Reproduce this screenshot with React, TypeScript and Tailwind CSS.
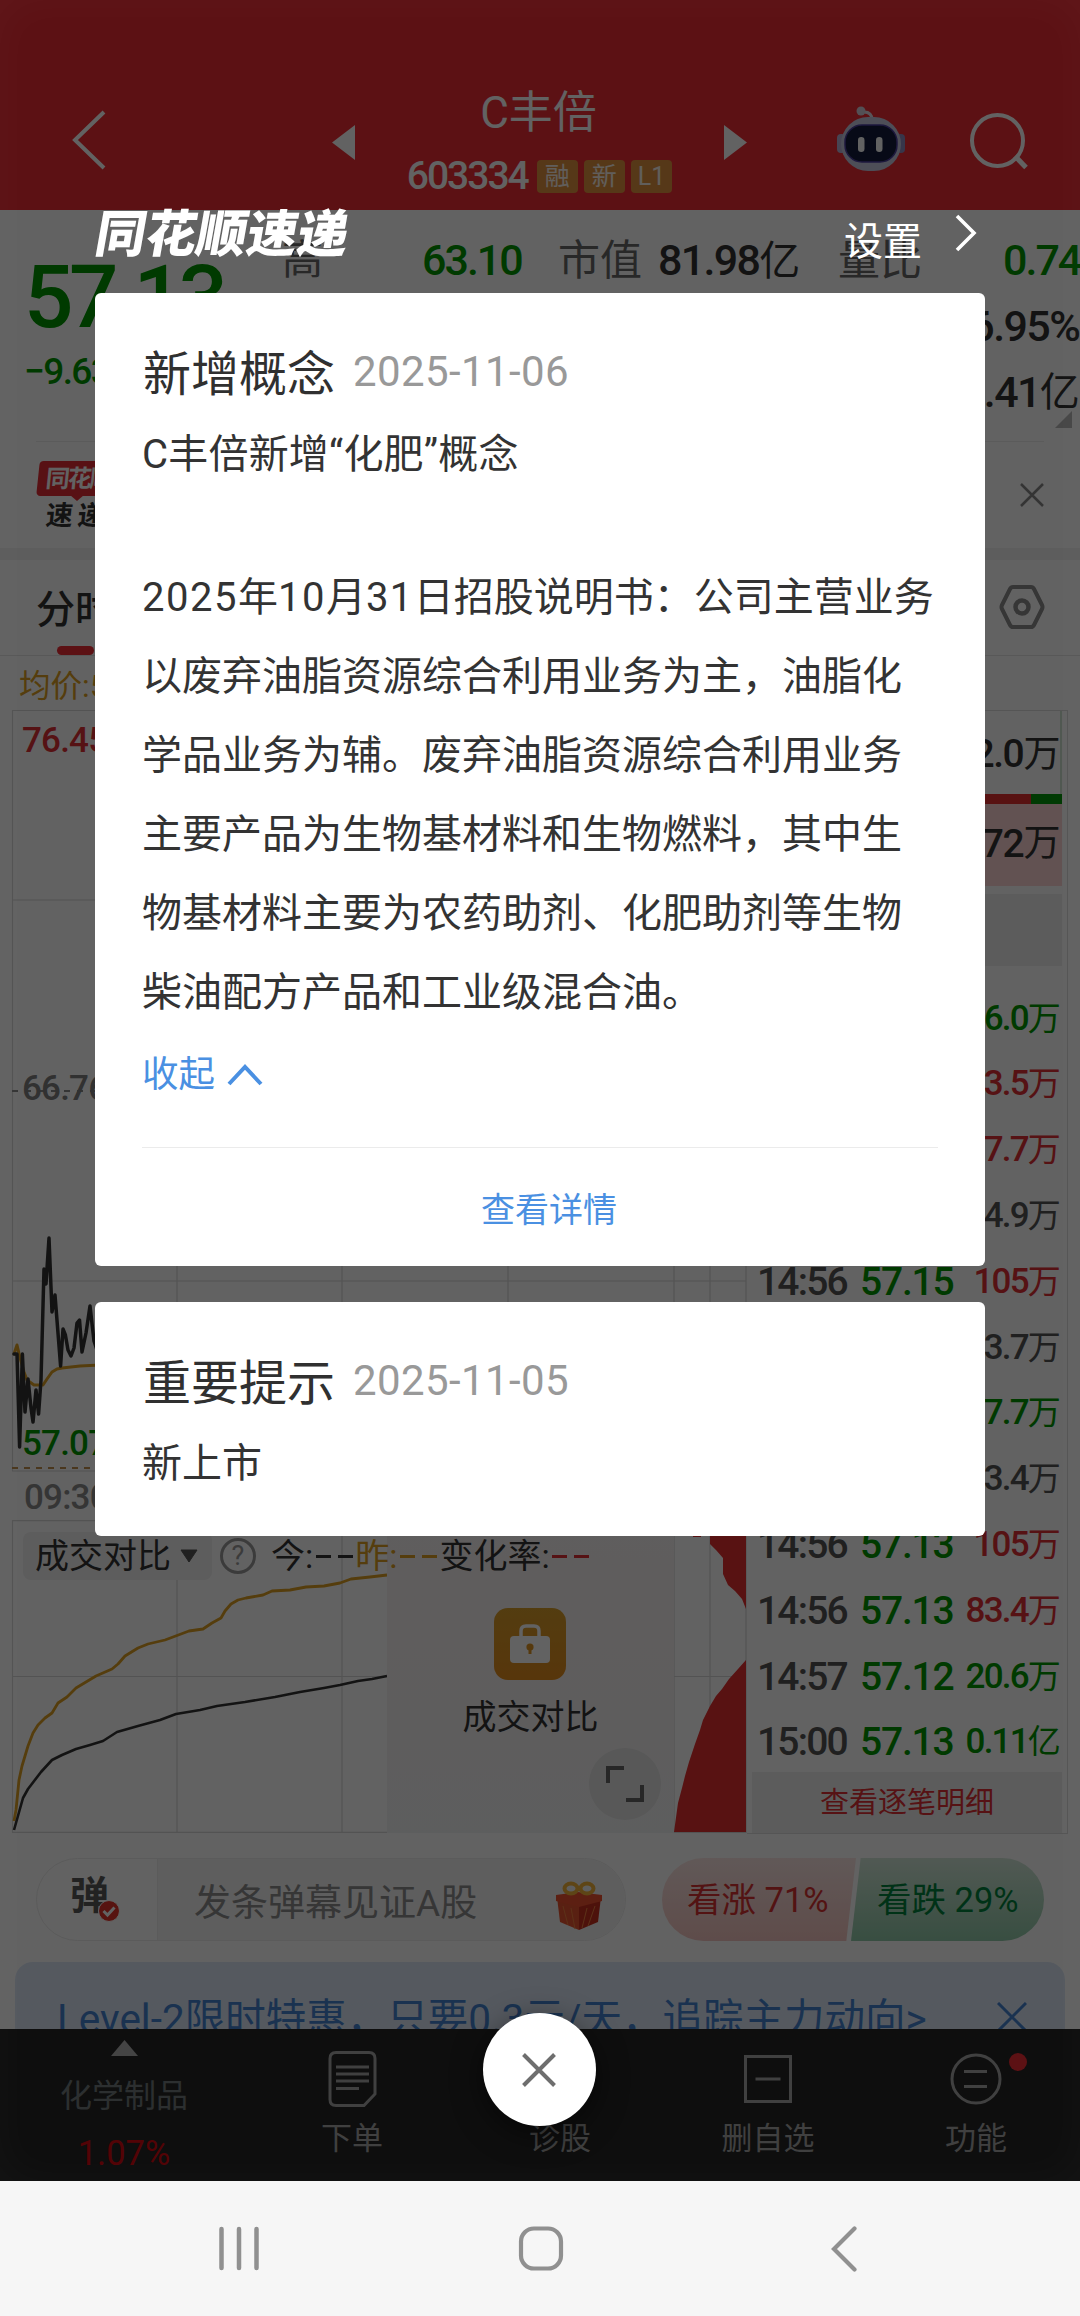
import React from 'react';

interface Tick {
  time: string;
  price: string;
  volume: string;
  tone: 'up' | 'down' | 'flat';
}

const ticks: Tick[] = [
  { time: '14:56', price: '57.13', volume: '36.0万', tone: 'down' },
  { time: '14:56', price: '57.15', volume: '83.5万', tone: 'up' },
  { time: '14:56', price: '57.15', volume: '67.7万', tone: 'up' },
  { time: '14:56', price: '57.14', volume: '54.9万', tone: 'flat' },
  { time: '14:56', price: '57.15', volume: '105万', tone: 'up' },
  { time: '14:56', price: '57.14', volume: '43.7万', tone: 'flat' },
  { time: '14:56', price: '57.13', volume: '77.7万', tone: 'down' },
  { time: '14:56', price: '57.13', volume: '63.4万', tone: 'flat' },
  { time: '14:56', price: '57.13', volume: '105万', tone: 'up' },
  { time: '14:56', price: '57.13', volume: '83.4万', tone: 'up' },
  { time: '14:57', price: '57.12', volume: '20.6万', tone: 'down' },
  { time: '15:00', price: '57.13', volume: '0.11亿', tone: 'down' },
];

const toneClass = {
  up: 'text-[#e03035]',
  down: 'text-[#009600]',
  flat: 'text-[#555]',
};

const RobotIcon: React.FC = () => (
  <svg width="70" height="68" viewBox="0 0 70 68" fill="none">
    <path d="M36 15c0-5-2-8-8-8" stroke="#e4dce8" strokeWidth="3" />
    <circle cx="25" cy="6" r="4.5" fill="#d8d0dc" />
    <rect x="1" y="29" width="9" height="19" rx="4" fill="#b9b4d8" />
    <rect x="60" y="29" width="9" height="19" rx="4" fill="#8f8cc0" />
    <rect x="5" y="12" width="60" height="54" rx="27" fill="#c9cbe2" />
    <rect x="9" y="20" width="52" height="37" rx="17" fill="#141c3c" stroke="#4c3fa0" strokeWidth="1.5" />
    <rect x="22" y="32" width="6.5" height="15" rx="3.2" fill="#fff" />
    <rect x="40" y="32" width="6.5" height="15" rx="3.2" fill="#fff" />
  </svg>
);

const Badge: React.FC<{ children: React.ReactNode }> = ({ children }) => (
  <span className="flex h-[33px] min-w-[41px] items-center justify-center rounded-[4px] bg-[#e0913f] px-[7px] text-[25px] leading-none text-white/90">
    {children}
  </span>
);

const Header: React.FC = () => (
  <header className="flex h-[210px] shrink-0 items-end bg-[#f02c34] pl-[72px] text-white">
    <div className="mb-[40px] w-[260px] shrink-0">
      <svg width="34" height="60" viewBox="0 0 34 60" fill="none" stroke="currentColor" strokeWidth="4">
        <path d="M32 2L3 30l29 28" />
      </svg>
    </div>
    <div className="mb-[50px] w-[23px] shrink-0">
      <svg width="23" height="35" viewBox="0 0 23 35" fill="currentColor">
        <path d="M23 0v35L0 17.5z" />
      </svg>
    </div>
    <div className="mb-[16px] flex w-[369px] shrink-0 flex-col items-center">
      <div className="-ml-[2px] text-[44px] leading-[60px]">C丰倍</div>
      <div className="mt-[15px] flex items-center gap-[6px]">
        <span className="mr-[3px] text-[39px] font-medium leading-[36px] tracking-[-2px]">603334</span>
        <Badge>融</Badge>
        <Badge>新</Badge>
        <Badge>L1</Badge>
      </div>
    </div>
    <div className="mb-[50px] w-[112px] shrink-0">
      <svg width="23" height="35" viewBox="0 0 23 35" fill="currentColor">
        <path d="M0 0v35l23-17.5z" />
      </svg>
    </div>
    <div className="mb-[37px] w-[134px] shrink-0">
      <RobotIcon />
    </div>
    <div className="mb-[40px] shrink-0">
      <svg width="58" height="58" viewBox="0 0 58 58" fill="none" stroke="currentColor" strokeWidth="4">
        <circle cx="27.5" cy="28.5" r="25.5" />
        <path d="M45 44l11 11.5" strokeWidth="5" />
      </svg>
    </div>
  </header>
);

const Quote: React.FC = () => (
  <section className="flex h-[231px] shrink-0 overflow-hidden text-[#333]">
    <div className="w-[282px] shrink-0 pl-[24px] font-medium text-[#009600]">
      <div className="mt-[45px] text-[87px] leading-[84px] tracking-[-4.5px]">57.13</div>
      <div className="mt-[12px] text-[37px] leading-[42px] tracking-[-1.6px]">−9.63%</div>
    </div>
    <div className="flex-1 pt-[18px]">
      <div className="flex h-[65px] items-center whitespace-nowrap text-[43px]">
        <span className="w-[140px] text-[41px] text-[#686868]">高</span>
        <span className="w-[136px] font-medium tracking-[-2px] text-[#009600]">63.10</span>
        <span className="w-[100px] text-[42px] text-[#686868]">市值</span>
        <span className="w-[180px] font-medium tracking-[-1.7px]">
          81.98<span className="text-[41px] font-normal">亿</span>
        </span>
        <span className="w-[165px] text-[42px] text-[#686868]">量比</span>
        <span className="font-medium tracking-[-2px] text-[#009600]">0.74</span>
      </div>
      <div className="flex h-[67px] items-center justify-end pr-px text-[43px] font-medium tracking-[-1.6px]">
        16.95%
      </div>
      <div className="flex h-[65px] items-center justify-end pr-[2px] text-[43px] font-medium tracking-[-1.6px]">
        14.41<span className="text-[40px] font-normal">亿</span>
      </div>
      <div className="-mt-[14px] flex justify-end pr-[8px]">
        <svg width="17" height="17" viewBox="0 0 17 17">
          <path d="M17 0v17H0z" fill="#b8b8b8" />
        </svg>
      </div>
    </div>
  </section>
);

const NewsStrip: React.FC = () => (
  <section className="flex h-[107px] shrink-0 items-start justify-between px-[36px]">
    <div className="flex w-[120px] flex-col border-t border-[#ececec] pt-[19px]">
      <div className="ml-[2px] flex h-[35px] w-[120px] -skew-x-6 items-center rounded-[4px] bg-[#e62e34] pl-[8px] text-[24px] font-bold leading-none tracking-[-2px] text-white">
        同花顺
      </div>
      <div className="-mt-px ml-[34px] h-0 w-0 border-x-[7px] border-t-[6px] border-x-transparent border-t-[#e62e34]"></div>
      <div className="-skew-x-6 pl-[10px] text-[27px] font-bold leading-[30px] tracking-[-1px] text-[#333]">速 递</div>
    </div>
    <div className="flex h-[106px] flex-1 items-center justify-end border-t border-[#ececec]">
      <svg width="24" height="24" viewBox="0 0 24 24" fill="none" stroke="#888" strokeWidth="2.5">
        <path d="M1 1l22 22M23 1L1 23" />
      </svg>
    </div>
  </section>
);

const Tabs: React.FC = () => (
  <nav className="flex h-[96px] shrink-0 items-start justify-between border-b border-[#e6e6e6] pl-[36px] pr-[35px]">
    <div className="flex flex-col items-center pt-[21px]">
      <span className="text-[39px] font-medium leading-[58px] text-[#333]">分时</span>
      <span className="mt-[7px] h-[9px] w-[37px] rounded-full bg-[#f02c34]"></span>
    </div>
    <svg className="mt-[25px]" width="46" height="44" viewBox="0 0 46 44" fill="none" stroke="#8c8c8c" strokeWidth="4">
      <path d="M14 2h18q2 0 3 2l8 16q1 2 0 4l-8 16q-1 2-3 2H14q-2 0-3-2L3 24q-1-2 0-4L11 4q1-2 3-2z" />
      <circle cx="23" cy="22" r="6.5" strokeWidth="4.5" />
    </svg>
  </nav>
);

const PRICE_LINE =
  '14,354 17,354 19.6,447 22.4,354 25,412 28,379 31,408 33,422 36,390 38.6,414 41,380 44,269 46,284 49,238 52,312 55,295 60.6,366 63,329 65.4,335 68,350 71,356 74,348 77,323 79.5,320 82,352 86,333 90,306 94,341 97,350';
const AVG_LINE = '14,354 17,345 19.6,356 24,372 27,380 34,385 43,385 47,379 52,372 57,369 62,368 80,366 100,365';
const YESTERDAY_LINE =
  '14,301 16,290 19,260 22,246 28,226 33,213 38,205 45,198 52,193 58,183 67,177 76,168 96,156 112,149 118,144 125,136 138,128 148,124 165,120 189,111 203,109 212,103 221,98 225,91 231,84 238,80 246,78 263,75 272,71 290,70 306,67 324,66 340,63 351,59 370,57 387,55';
const TODAY_LINE =
  '14,310 23,278 28,269 41,252 52,240 62,235 76,229 90,225 103,221 117,212 138,206 160,200 176,194 200,190 217,186 245,182 275,177 300,172 324,168 340,165 358,161 372,159 387,156';

const Charts: React.FC = () => (
  <div className="w-[747px] shrink-0">
    <svg width="747" height="765" viewBox="0 710 747 765" fill="none" className="block">
      <g stroke="#d8d8d8" strokeWidth="1.2">
        <path d="M12 710.5H746M12 900H746M12 1281H746M12 1471H746" />
        <path d="M12.5 710v761M177 710v761M342 710v761M508 710v761M674 710v761M710 710v761M746 710v761" />
      </g>
      <path d="M12 1091H746" stroke="#8a8a8a" strokeWidth="2" strokeDasharray="6 7" />
      <path d="M12 1468H746" stroke="#c08f50" strokeWidth="1.8" strokeDasharray="6 6" />
      <g transform="translate(0 1000)" strokeWidth="3.5" strokeLinejoin="round" strokeLinecap="round">
        <polyline points={AVG_LINE} stroke="#dd9f22" strokeWidth="3" />
        <polyline points={PRICE_LINE} stroke="#333" />
      </g>
      <g fontSize="35" fontWeight="500" letterSpacing="-0.8">
        <text x="22" y="752" fill="#e03035">76.45</text>
        <text x="22" y="1100" fill="#808080">66.76</text>
        <text x="22" y="1455" fill="#009600">57.07</text>
      </g>
    </svg>
    <div className="h-[45px] pl-[24px] text-[35px] font-medium leading-[45px] tracking-[-0.8px] text-[#8a8a8a]">09:30</div>
    <div className="relative h-[313px]">
      <svg width="747" height="313" viewBox="0 0 747 313" fill="none" className="block">
        <g stroke="#d8d8d8" strokeWidth="1.2">
          <path d="M12 .6H746M12 156.5H746M12 312.4H746" />
          <path d="M12.5 0v313M177 0v313M342 0v313M674 0v313M710 0v313M746 0v313" />
        </g>
        <polyline points={YESTERDAY_LINE} stroke="#dd9f22" strokeWidth="2.8" strokeLinejoin="round" />
        <polyline points={TODAY_LINE} stroke="#333" strokeWidth="2.6" strokeLinejoin="round" />
        <path
          d="M674 312l4-29 4-15 3-12 4-14 6-18 5-14 3-10 7-14 6-10 6-7 7-10 9-10 8-9v172z"
          fill="#e4302f"
        />
        <path d="M693 0v17h8v-2h9v9l6 6 7 8v16l5 11 7 6 7 8 4 10V0z" fill="#e4302f" />
      </svg>

      {/* locked part of the comparison chart */}
      <div className="absolute left-[387px] top-0 flex h-[313px] w-[287px] flex-col items-center bg-linear-to-b from-[#f6f4f4] via-[#f6f1f1] via-40% to-[#f3f4f5] pt-[88px]">
        <div className="-ml-px flex h-[72px] w-[72px] items-center justify-center rounded-[14px] bg-linear-to-b from-[#d99e2a] to-[#e28c1e]">
          <svg width="42" height="42" viewBox="0 0 42 42" fill="none">
            <path d="M12 14V8q0-5 5-5h8q5 0 5 5v6" stroke="#fff" strokeWidth="3.5" />
            <rect x="1" y="13" width="40" height="27" rx="4" fill="#fff" />
            <circle cx="21" cy="24" r="3.6" fill="#df9524" />
            <path d="M21 25v6" stroke="#df9524" strokeWidth="3" />
          </svg>
        </div>
        <div className="mt-[13px] text-[34px] leading-[48px] text-[#333]">成交对比</div>
      </div>
      <div className="absolute left-[589px] top-[228px] flex h-[72px] w-[72px] items-center justify-center rounded-full bg-[#e4e4e4]">
        <svg width="40" height="38" viewBox="0 0 40 38" fill="none" stroke="#666" strokeWidth="4">
          <path d="M3 18V3h16M37 20v15H21" />
        </svg>
      </div>

      <div className="absolute left-[23px] top-[12px] flex h-[48px] items-center whitespace-nowrap text-[34px] text-[#333]">
        <div className="flex h-[48px] w-[189px] items-center gap-[9px] rounded-[8px] bg-[#f2f2f2] pl-[12px]">
          成交对比
          <svg width="18" height="14" viewBox="0 0 18 14">
            <path d="M1 1h16L9 13z" fill="#555" stroke="#555" strokeLinejoin="round" />
          </svg>
        </div>
        <div className="ml-[8px] flex h-[36px] w-[36px] items-center justify-center rounded-full border-[3px] border-[#9a9a9a] text-[27px] leading-none text-[#9a9a9a]">
          ?
        </div>
        <span className="ml-[15px]">今:</span>
        <Dashes className="bg-[#333]" />
        <span className="text-[#dd9f22]">昨:</span>
        <Dashes className="bg-[#dd9f22]" />
        <span>变化率:</span>
        <Dashes className="bg-[#e03035]" />
      </div>
    </div>
  </div>
);

const Dashes: React.FC<{ className: string }> = ({ className }) => (
  <span className="flex gap-[7px] px-[2.5px]">
    <i className={`h-[3px] w-[15px] ${className}`}></i>
    <i className={`h-[3px] w-[15px] ${className}`}></i>
  </span>
);

const OrderPanel: React.FC = () => (
  <div className="flex h-[1124px] w-[321px] flex-col border-b border-r border-t border-[#dcdcdc] pl-[5px] pr-[5px] text-[#333]">
    <div className="flex h-[83px] shrink-0 items-center justify-end border-r-2 border-[#cfe6d4] pr-px pt-[4px] text-[39px] font-medium tracking-[-1.4px]">
      12.0<span className="text-[37px] font-normal">万</span>
    </div>
    <div className="flex h-[10px] shrink-0">
      <div className="flex-1 bg-[#e4302f]"></div>
      <div className="w-[31px] bg-[#00960a]"></div>
    </div>
    <div className="flex h-[82px] shrink-0 items-start justify-end bg-[#ffd6d6] pr-[3px] pt-[9px] text-[39px] font-medium leading-[62px] tracking-[-1.4px]">
      172<span className="text-[37px] font-normal">万</span>
    </div>
    <div className="mt-[8px] h-[72px] shrink-0 bg-[#f0f0f0]"></div>
    <div className="mt-[20px] shrink-0">
      {ticks.map((tick, index) => (
        <div key={index} className="flex h-[65.8px] items-center whitespace-nowrap font-medium">
          <span className="w-[104px] pl-[5px] text-[39px] tracking-[-1.8px] text-[#555]">{tick.time}</span>
          <span className="w-[104px] pl-[4px] text-[39px] tracking-[-1.2px] text-[#009600]">{tick.price}</span>
          <span className={`flex-1 pr-[3px] text-right text-[35px] tracking-[-1.8px] ${toneClass[tick.tone]}`}>
            {tick.volume.slice(0, -1)}
            <span className="text-[33px] font-normal">{tick.volume.slice(-1)}</span>
          </span>
        </div>
      ))}
    </div>
    <div className="-mt-[4px] flex h-[61px] shrink-0 items-center justify-center bg-[#f0f0f0] pt-[3px] text-[29px] text-[#e03035]">
      查看逐笔明细
    </div>
  </div>
);

const DanmuBar: React.FC = () => (
  <section className="flex h-[83px] shrink-0 pl-[36px] pr-[36px]">
    <div className="flex w-[590px] overflow-hidden rounded-full border border-[#ececec]">
      <div className="relative w-[121px] border-r border-[#ececec] pl-[33px] pt-[15px]">
        <div className="text-[39px] font-bold leading-[44px] text-[#585858]">弹</div>
        <svg className="absolute left-[61px] top-[41px]" width="22" height="22" viewBox="0 0 22 22" fill="none">
          <circle cx="11" cy="11" r="10.5" fill="#e2332b" stroke="#fff" />
          <path d="M5.5 11l4 4 7-7.5" stroke="#fff" strokeWidth="3" />
        </svg>
      </div>
      <div className="flex flex-1 items-center justify-between bg-[#f4f4f4] pl-[36px] pr-[22px] text-[37px] text-[#8c8c8c]">
        <span className="mt-[8px]">发条弹幕见证A股</span>
        <svg width="48" height="52" viewBox="0 0 48 52" fill="none" className="mt-[12px]">
          <path d="M2 17l22 6v27L5 42z" fill="#e8542f" />
          <path d="M46 17l-22 6v27l19-8z" fill="#c8301f" />
          <path d="M1 15l22-3 24 3v6l-23 6L1 21z" fill="#f0512f" />
          <path d="M8 26l5 19M16 28l4 21M32 28l-5 20M40 26l-7 20" stroke="#f08040" strokeWidth="1" />
          <ellipse cx="16" cy="8.500" rx="6.500" ry="5" stroke="#f4b53a" strokeWidth="4" />
          <ellipse cx="32" cy="8.500" rx="6.500" ry="5" stroke="#f4b53a" strokeWidth="4" />
        </svg>
      </div>
    </div>
    <div className="ml-[36px] flex w-[382px] text-[34.500px] leading-[84px]">
      <div className="w-[194px] rounded-l-full bg-linear-to-b from-[#fbe6e4] to-[#f5c6c1] pl-[25px] text-[#d83232] [clip-path:polygon(0_0,100%_0,95%_100%,0_100%)]">
        看涨 71%
      </div>
      <div className="-ml-[5px] w-[193px] rounded-r-full bg-linear-to-b from-[#d3e8da] to-[#92cbaa] pl-[26px] text-[#00823c] [clip-path:polygon(5%_0,100%_0,100%_100%,0_100%)]">
        看跌 29%
      </div>
    </div>
  </section>
);

const PromoBanner: React.FC = () => (
  <section className="mx-[15px] mt-[21px] flex h-[67px] shrink-0 items-start justify-between overflow-hidden rounded-t-[18px] bg-[#dce8f8] pl-[42px] pr-[38px] pt-[28px] text-[#4583d0]">
    <span className="whitespace-nowrap text-[40.500px] leading-[58px]">Level-2限时特惠，只要0.3元/天，追踪主力动向&gt;</span>
    <svg className="mt-[12px]" width="30" height="30" viewBox="0 0 30 30" fill="none" stroke="currentColor" strokeWidth="3">
      <path d="M1 1l28 28M29 1L1 29" />
    </svg>
  </section>
);

const TabBar: React.FC = () => (
  <footer className="flex h-[152px] shrink-0 bg-[#252525] text-[31px] leading-[44px] text-[#a6a6a6]">
    <div className="flex w-[248px] flex-col items-center pt-[11px]">
      <svg width="27" height="16" viewBox="0 0 27 16">
        <path d="M13.500 0L27 16H0z" fill="#b0b0b0" />
      </svg>
      <span className="mt-[17px] text-[32px] leading-[46px] text-[#737b7d]">化学制品</span>
      <span className="mt-[12px] text-[34.500px] leading-[44px] text-[#d80a10]">1.07%</span>
    </div>
    <div className="flex w-[208px] flex-col items-center pt-[22px]">
      <svg width="49" height="56" viewBox="0 0 49 56" fill="none" stroke="currentColor" strokeWidth="3">
        <path d="M8 1.500h33q6 0 6 6V43L36 54.500H8q-6 0-6-6v-41q0-6 6-6z" />
        <path d="M8 16h33M8 23h33M8 30h33M8 37.500h23" />
      </svg>
      <span className="mt-[10px]">下单</span>
    </div>
    <div className="flex w-[208px] flex-col items-center pt-[88px]">诊股</div>
    <div className="flex w-[208px] flex-col items-center pt-[26px]">
      <svg width="48" height="48" viewBox="0 0 48 48" fill="none" stroke="currentColor" strokeWidth="3">
        <path d="M1.500 1.500h45v45h-45zM11.500 24h25" />
      </svg>
      <span className="mt-[14px]">删自选</span>
    </div>
    <div className="relative flex w-[208px] flex-col items-center pt-[24px]">
      <svg width="52" height="52" viewBox="0 0 52 52" fill="none" stroke="currentColor" strokeWidth="3">
        <circle cx="26" cy="26" r="24" />
        <path d="M14 18.500h23M14 33.500h23" />
      </svg>
      <span className="mt-[12px]">功能</span>
      <i className="absolute left-[137px] top-[24px] h-[18px] w-[18px] rounded-full bg-[#f02c34]"></i>
    </div>
  </footer>
);

const SystemBar: React.FC = () => (
  <div className="flex h-[135px] shrink-0 items-start justify-between bg-[#f6f6f6] pl-[218px] pr-[223px] pt-[45px] text-[#909090]">
    <svg width="42" height="45" viewBox="0 0 42 45" stroke="currentColor" strokeWidth="4.500" strokeLinecap="round">
      <path d="M3.500 3v39M21 3v39M38.500 3v39" />
    </svg>
    <svg className="mr-[9px]" width="46" height="45" viewBox="0 0 46 45" fill="none" stroke="currentColor" strokeWidth="4.200">
      <rect x="3" y="2.500" width="40" height="40" rx="13" />
    </svg>
    <svg width="26" height="46" viewBox="0 0 26 46" fill="none" stroke="currentColor" strokeWidth="4.200" strokeLinecap="round">
      <path d="M23.500 2.500L3 23l20.500 20.500" />
    </svg>
  </div>
);

interface NoticeHeadProps {
  title: string;
  date: string;
}

const NoticeHead: React.FC<NoticeHeadProps> = ({ title, date }) => (
  <div className="flex h-[70px] items-center gap-[18px] whitespace-nowrap pl-px">
    <h2 className="mt-[6px] text-[48px] text-[#303030]">{title}</h2>
    <span className="text-[42px] leading-none tracking-[0.4px] text-[#999]">{date}</span>
  </div>
);

const NoticeDialog: React.FC = () => (
  <div className="absolute inset-x-0 top-0 flex h-[2181px] flex-col bg-black/[0.615] px-[95px] pt-[208px] shadow-[inset_0_0_50px_rgba(255,255,255,0.03)]">
    <div className="flex h-[85px] shrink-0 items-start justify-between pr-[7px] text-white">
      <span className="mt-[3px] -skew-x-10 pl-px text-[50.500px] font-black leading-[48px]">同花顺速递</span>
      <div className="flex items-start">
        <span className="mt-[7px] text-[39px] leading-[54px]">设置</span>
        <svg className="ml-[32px] mt-[6px]" width="24" height="38" viewBox="0 0 24 38" fill="none" stroke="currentColor" strokeWidth="3.600">
          <path d="M3 2l17 17L3 36" />
        </svg>
      </div>
    </div>

    <article className="flex h-[973px] shrink-0 flex-col rounded-[6px] bg-white px-[47px] pt-[44px] text-[40px] text-[#333]">
      <NoticeHead title="新增概念" date="2025-11-06" />
      <p className="mt-[8px] leading-[79px] tracking-[0.2px]">C丰倍新增“化肥”概念</p>
      <p className="mt-[64px] whitespace-nowrap leading-[79px]">
        <span className="tracking-[1.5px]">2025</span>年<span className="tracking-[1.5px]">10</span>月
        <span className="tracking-[1.5px]">31</span>日招股说明书：公司主营业务
        <br />
        以废弃油脂资源综合利用业务为主，油脂化
        <br />
        学品业务为辅。废弃油脂资源综合利用业务
        <br />
        主要产品为生物基材料和生物燃料，其中生
        <br />
        物基材料主要为农药助剂、化肥助剂等生物
        <br />
        柴油配方产品和工业级混合油。
      </p>
      <button className="mt-[15px] flex h-[56px] items-center gap-[12px] text-[36.500px] text-[#4a90e2]">
        收起
        <svg width="36" height="22" viewBox="0 0 36 22" fill="none" stroke="currentColor" strokeWidth="4">
          <path d="M2 20L18 3l16 17" />
        </svg>
      </button>
      <div className="mt-[44px] h-px bg-[#ebebeb]"></div>
      <button className="mt-[36px] h-[52px] pl-[18px] text-[34px] leading-[52px] text-[#4a90e2]">查看详情</button>
    </article>

    <article className="mt-[36px] flex h-[234px] shrink-0 flex-col rounded-[6px] bg-white px-[47px] pt-[44px] text-[40px] text-[#333]">
      <NoticeHead title="重要提示" date="2025-11-05" />
      <p className="mt-[8px] leading-[79px]">新上市</p>
    </article>

    <button className="-ml-[2px] mt-[477px] flex h-[113px] w-[113px] shrink-0 items-center justify-center self-center rounded-full bg-white shadow-[0_8px_30px_rgba(0,0,0,0.5)]">
      <svg width="34" height="34" viewBox="0 0 34 34" fill="none" stroke="#6e6e6e" strokeWidth="4">
        <path d="M1.500 1.500l31 31M32.500 1.500l-31 31" />
      </svg>
    </button>
  </div>
);

const App: React.FC = () => {
  return (
    <div className="relative flex h-[2316px] w-[1080px] flex-col overflow-hidden bg-white font-[Roboto,'Noto_Sans_CJK_SC',sans-serif]">
      <Header />
      <Quote />
      <NewsStrip />
      <div className="h-[12px] shrink-0 bg-[#f2f2f2]"></div>
      <Tabs />
      <div className="flex h-[54px] shrink-0 items-center pl-[19px] pt-[7px] text-[31.500px] text-[#dd9f22]">均价:59.52</div>
      <div className="flex h-[1124px] shrink-0">
        <Charts />
        <OrderPanel />
      </div>
      <div className="h-[24px] shrink-0"></div>
      <DanmuBar />
      <PromoBanner />
      <TabBar />
      <SystemBar />
      <NoticeDialog />
    </div>
  );
};

export default App;
